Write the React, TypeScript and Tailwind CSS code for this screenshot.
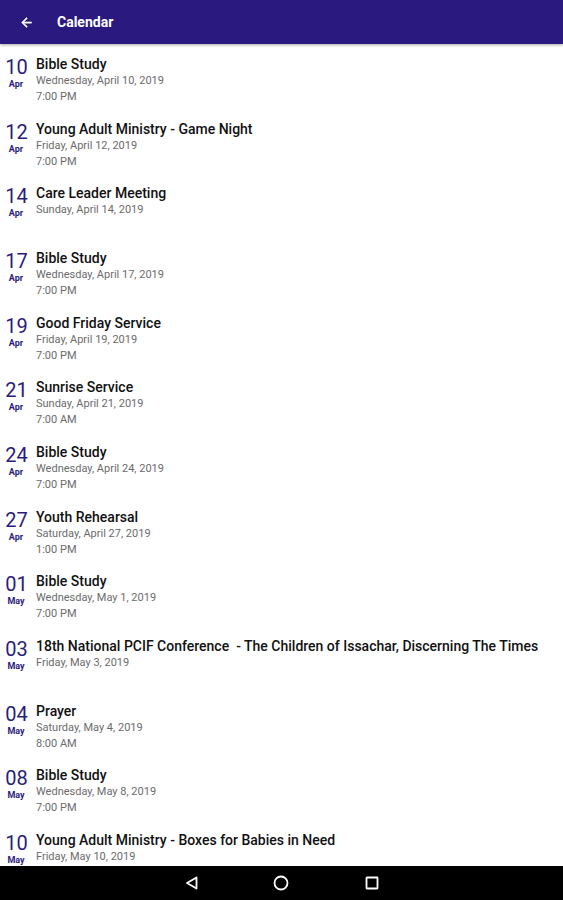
import React from "react";

type Ev = { d: string; m: string; title: string; date: string; time?: string };

const events: Ev[] = [
  { d: "10", m: "Apr", title: "Bible Study", date: "Wednesday, April 10, 2019", time: "7:00 PM" },
  { d: "12", m: "Apr", title: "Young Adult Ministry - Game Night", date: "Friday, April 12, 2019", time: "7:00 PM" },
  { d: "14", m: "Apr", title: "Care Leader Meeting", date: "Sunday, April 14, 2019" },
  { d: "17", m: "Apr", title: "Bible Study", date: "Wednesday, April 17, 2019", time: "7:00 PM" },
  { d: "19", m: "Apr", title: "Good Friday Service", date: "Friday, April 19, 2019", time: "7:00 PM" },
  { d: "21", m: "Apr", title: "Sunrise Service", date: "Sunday, April 21, 2019", time: "7:00 AM" },
  { d: "24", m: "Apr", title: "Bible Study", date: "Wednesday, April 24, 2019", time: "7:00 PM" },
  { d: "27", m: "Apr", title: "Youth Rehearsal", date: "Saturday, April 27, 2019", time: "1:00 PM" },
  { d: "01", m: "May", title: "Bible Study", date: "Wednesday, May 1, 2019", time: "7:00 PM" },
  { d: "03", m: "May", title: "18th National PCIF Conference  - The Children of Issachar, Discerning The Times", date: "Friday, May 3, 2019" },
  { d: "04", m: "May", title: "Prayer", date: "Saturday, May 4, 2019", time: "8:00 AM" },
  { d: "08", m: "May", title: "Bible Study", date: "Wednesday, May 8, 2019", time: "7:00 PM" },
  { d: "10", m: "May", title: "Young Adult Ministry - Boxes for Babies in Need", date: "Friday, May 10, 2019" },
];

function Row({ e }: { e: Ev }) {
  return (
    <div className="flex h-[64.67px] shrink-0">
      <div className="w-[32px] shrink-0 flex flex-col items-center pt-[10px]">
        <div className="text-[20px] leading-[24px] text-[#2a1c7c] font-normal pl-[1px]">{e.d}</div>
        <div className="text-[9px] leading-[10px] font-bold text-[#2a1c7c]">{e.m}</div>
      </div>
      <div className="flex flex-col pl-[4px] pt-[10px] whitespace-pre">
        <div className="text-[14px] leading-[18px] font-medium text-[#111]">{e.title}</div>
        <div className="text-[11px] leading-[16px] text-[#6b6b6b]">{e.date}</div>
        {e.time && <div className="text-[11px] leading-[16px] text-[#6b6b6b]">{e.time}</div>}
      </div>
    </div>
  );
}

export default function App() {
  return (
    <div className="w-[563px] h-[900px] flex flex-col bg-white overflow-hidden" style={{ fontFamily: "Roboto, 'Noto Sans', sans-serif" }}>
      <div className="h-[44px] shrink-0 bg-[#2a1a7f] flex items-center shadow-[0_1px_3px_rgba(0,0,0,0.35)] z-10">
        <svg width="15" height="15" viewBox="0 0 24 24" className="ml-[19px]">
          <path d="M20 11H7.83l5.59-5.59L12 4l-8 8 8 8 1.41-1.41L7.83 13H20v-2z" fill="#fff" stroke="#fff" strokeWidth="0.8" />
        </svg>
        <div className="ml-[23px] text-white text-[14px] font-bold">Calendar</div>
      </div>
      <div className="flex-1 flex flex-col overflow-hidden pt-[1px]">
        {events.map((e, i) => (
          <Row key={i} e={e} />
        ))}
      </div>
      <div className="h-[34px] shrink-0 bg-black flex items-center">
        <svg width="14" height="14" viewBox="0 0 14 14" className="ml-[185px]">
          <path d="M11.5 1.5 L2 7 L11.5 12.5 Z" fill="none" stroke="#fff" strokeWidth="1.8" strokeLinejoin="round" />
        </svg>
        <svg width="16" height="16" viewBox="0 0 16 16" className="ml-[74px]">
          <circle cx="8" cy="8" r="6.5" fill="none" stroke="#fff" strokeWidth="1.8" />
        </svg>
        <svg width="14" height="14" viewBox="0 0 14 14" className="ml-[76px]">
          <rect x="1.5" y="1.5" width="11" height="11" rx="0.5" fill="none" stroke="#fff" strokeWidth="1.8" />
        </svg>
      </div>
    </div>
  );
}
